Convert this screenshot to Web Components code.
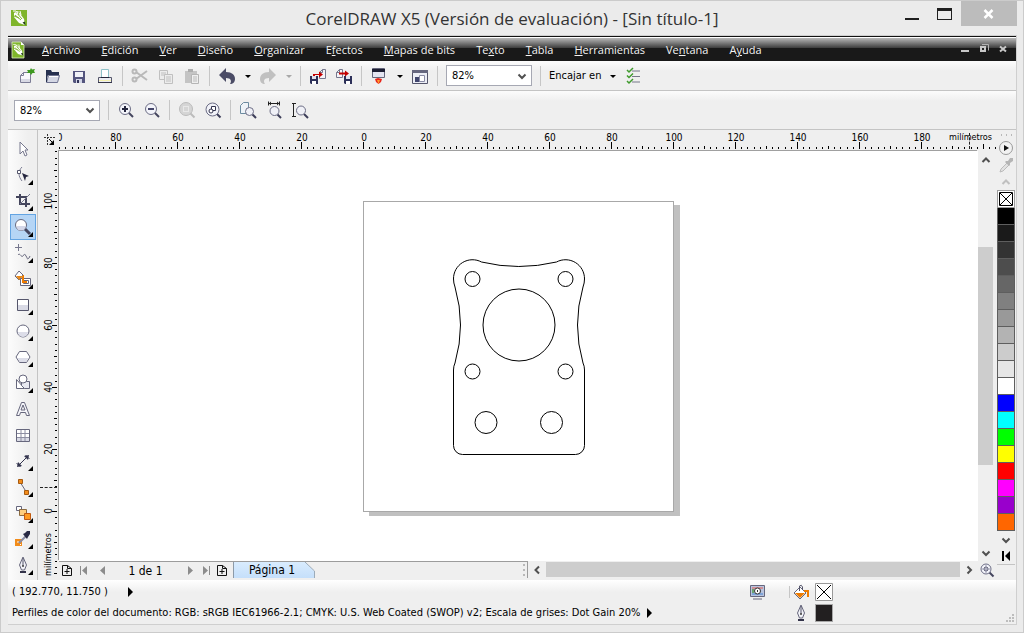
<!DOCTYPE html>
<html lang="es">
<head>
<meta charset="utf-8">
<title>CorelDRAW X5</title>
<style>
html, body { margin: 0; height: 100%; }
body { background: #ebebeb; --ui: "DejaVu Sans Condensed", "DejaVu Sans", sans-serif; --segoe: "Open Sans", "Noto Sans", sans-serif; font-family: var(--ui); font-size: 11px; color: #000; }
</style>
</head>
<body>
<corel-window></corel-window>
<script>
const BASE = `*{box-sizing:border-box}button{font:inherit;color:inherit;border:0;padding:0;margin:0;background:none;display:flex;align-items:center;justify-content:center}svg{display:block}`;

function component(name, html) {
  const template = document.createElement('template');
  customElements.define(name, class extends HTMLElement {
    connectedCallback() {
      if (this.shadowRoot) return;
      const root = this.attachShadow({ mode: 'open' });
      template.innerHTML = `<style>${BASE}</style>` + (typeof html === 'function' ? html(this) : html);
      root.append(template.content.cloneNode(true));
    }
  });
}

/* ---------- icons, 20 x 20 grid ---------- */
const doc = (x, y, w, h, s, f) => `<path d="M${x + 3} ${y}h${w - 3}v${h}h${-w}v${3 - h}z" fill="${f}" stroke="${s}"/><path d="M${x + 3} ${y}v3h-3" fill="none" stroke="${s}"/>`;
const floppy = (x, y) => `<path d="M${x} ${y}h8v8h-7l-1 -1z" fill="#2c3058"/><path d="M${x + 2} ${y}h4v3h-4z" fill="#dfe2ee"/><path d="M${x + 2} ${y + 5}h4v3h-4z" fill="#fff"/>`;
const lens = (stroke, fill, inner, handle) => `<path d="M12.500 12.500l4.500 4.500" stroke="${handle}" stroke-width="2"/><circle cx="9" cy="9" r="5.500" fill="${fill}" stroke="${stroke}"/>${inner}`;
const nib = `<path d="M10 2l3.500 8l-2 5h-3l-2 -5z" fill="#f2f3f8" stroke="#66667c"/><path d="M10 3v8" stroke="#55556a"/><circle cx="10" cy="11" r="1" fill="#444"/><path d="M7 17h6" stroke="#33334a" stroke-width="2"/>`;
const leaf = `<path d="M5 5L9 3L15 11L16 17L10 15L5 9z" fill="#fff"/><path d="M6 7l6 5M7 4l6 7M9 4l1 3M5 8l5 2" stroke="#80b32e"/><path d="M4 3l3 0l2 3M11 3l1 4" stroke="#fff" fill="none"/><path d="M13.500 14.500l3 3l-.5 -4z" fill="#24401a"/>`;
const ICONS = {
  logo: `<path d="M2 2h16v16h-16z" fill="#7fb52b"/>${leaf}`,
  doclogo: `<path d="M4 2h9l3 3v13h-12z" fill="#7fb52b" stroke="#dff0c4" stroke-width=".8"/><path d="M13 2v3h3z" fill="#fff"/><g transform="translate(2 2) scale(.8)">${leaf}</g>`,
  new: `<path d="M6.500 6.500h7v10h-10v-7z" fill="#f8f8fb" stroke="#7c7d96"/><path d="M6.500 6.500v3h-3" fill="none" stroke="#7c7d96"/><path d="M4 13h9v3h-9z" fill="#d8d9e4"/><path d="M10 4l3 0l1 -2l1 1.500l3 -.5l-1 2l1 2l-2.500 0l-1.500 2l-1 -2l-3 0l1 -1.500z" fill="#3d991f"/>`,
  open: `<path d="M3 4h5l1 2h7v3h-11l-2 6z" fill="#26304f"/><path d="M5.500 9.500h11l-2 7h-11z" fill="#d4d7e4" stroke="#6e7290"/><path d="M6 10.500h9" stroke="#fff"/><path d="M3.500 5v11" stroke="#26304f"/>`,
  save: `<path d="M4 5h12v12h-11l-1 -1z" fill="#54557e"/><path d="M6 6h8v5h-8z" fill="#f0f1f7"/><path d="M7 13h6v4h-6z" fill="#d2d5e6"/><path d="M8 14h2v3h-2z" fill="#33355a"/>`,
  print: `<path d="M6.500 3.500h7v8h-7z" fill="#fff" stroke="#8fc2c9"/><path d="M3.500 11.500h13v5h-13z" fill="#ecedf2" stroke="#55566a"/><path d="M4 14h12v1h-12z" fill="#f6f2b0"/><path d="M3 16h14v1h-14z" fill="#35364a"/><path d="M6 11h8v1h-8z" fill="#25263a"/>`,
  cut: `<g fill="none" stroke="#b9b9b9" stroke-width="2"><path d="M6 6l11 8M6 13l11 -8"/><circle cx="4.500" cy="5.500" r="2"/><circle cx="4.500" cy="13.500" r="2"/></g>`,
  copy: `<g fill="#ececec" stroke="#c0c0c0"><path d="M3.500 4.500h8v9h-8z"/><path d="M5 7h5M5 9h5"/><path d="M8.500 8.500h8v9h-8z"/><path d="M10 11h5M10 13h5M10 15h5"/></g>`,
  paste: `<path d="M3 5h12v12h-12z" fill="#c4c4c4"/><path d="M6 3h5v3h-5z" fill="#adadad"/><path d="M9.500 8.500h7v9h-7z" fill="#eee" stroke="#b5b5b5"/><path d="M11 11h4M11 13h4M11 15h4" stroke="#bbb"/>`,
  undo: `<path d="M2 9l7 -7v4c6 0 9 3 9 7c0 3 -2 5 -5 5c2 -3 1 -6 -4 -6v4z" fill="#4b4c66"/>`,
  redo: `<path d="M18 9l-7 -7v4c-6 0 -9 3 -9 7c0 3 2 5 5 5c-2 -3 -1 -6 4 -6v4z" fill="#c0c0c0"/>`,
  import: `${doc(11.5, 3.5, 6, 9, '#77788e', '#f4f4f8')}${floppy(2, 10)}<path d="M5 8h6v-2.500l4 3l-4 3v-2.500h-4v1h-2z" fill="#c40000"/>`,
  export: `${doc(2.5, 3.5, 6, 8, '#77788e', '#f4f4f8')}${floppy(10, 10)}<path d="M5 6.500h6v-2l4 3l-4 3v-2h-6z" fill="#c40000"/>`,
  launch: `<path d="M3.500 2.500h12v9h-12z" fill="#e3e4f0" stroke="#65667c"/><path d="M3 3h13v3h-13z" fill="#1d1e33"/><path d="M6 13l3 -1l4 1l-1 3l-2.500 2l-2.500 -2z" fill="#e8261b"/><path d="M8 14h3l-1.500 4z" fill="#ff9a2e"/>`,
  welcome: `<path d="M2.500 4.500h15v13h-15z" fill="#eceef6" stroke="#55566c"/><path d="M2 4h16v3h-16z" fill="#66677f"/><path d="M5 11h6v5h-6z" fill="#41466e"/><path d="M9.500 9.500h5v6h-5z" fill="#fff" stroke="#8a8ca6"/>`,
  options: `<path d="M9 5h8M9 10.500h8M9 16h8" stroke="#77788a"/><path d="M4 4l2 2l4 -4M4 9.500l2 2l4 -4M4 15l2 2l4 -4" stroke="#3f9a2c" stroke-width="1.500" fill="none"/>`,
  zoomin: lens('#6c6d85', '#f3f4fa', '<path d="M9 6v6M6 9h6" stroke="#25263f" stroke-width="2"/>', '#44455e'),
  zoomout: lens('#6c6d85', '#f3f4fa', '<path d="M6 9h6" stroke="#44456a" stroke-width="2"/>', '#44455e'),
  zoomsel: `<path d="M13 13l4.500 4.500" stroke="#bcbcbc" stroke-width="2"/><circle cx="9" cy="9" r="6.500" fill="#d5d5d5" stroke="#bcbcbc"/><path d="M6.500 6.500h5v5h-5z" fill="none" stroke="#fafafa" stroke-dasharray="1 1"/>`,
  zoomall: `<path d="M13.500 13.500l4 4" stroke="#3c3d58" stroke-width="2"/><circle cx="9.500" cy="9.500" r="6.500" fill="#f0f1f7" stroke="#6c6d85"/><path d="M8.500 6.500h4v4h-4z" fill="#fff" stroke="#33344e"/><circle cx="8" cy="11" r="2" fill="#fff" stroke="#33344e"/>`,
  zoompage: `<path d="M5.500 2.500h5v11h-8v-8z" fill="#eef3f8" stroke="#6c8ba0"/><path d="M14 14l4 4" stroke="#3c3d58" stroke-width="2"/><circle cx="11.500" cy="11.500" r="4" fill="#f0f1f7" stroke="#6c6d85"/>`,
  zoomwidth: `<path d="M4 3.500h12M4.500 1.500v4M15.500 1.500v4" stroke="#222"/><path d="M5 3.500l2 -2v4zM15 3.500l-2 -2v4z" fill="#222"/><path d="M13 14l4 4" stroke="#3c3d58" stroke-width="2"/><circle cx="10.500" cy="11" r="4.500" fill="#f0f1f7" stroke="#6c6d85"/>`,
  zoomheight: `<path d="M3.500 4v12M2 3.500h4M2 16.500h4" stroke="#222"/><path d="M14 14l4 4" stroke="#3c3d58" stroke-width="2"/><circle cx="11" cy="10.500" r="4.500" fill="#f0f1f7" stroke="#6c6d85"/>`,
  pick: `<path d="M7 3v12l3 -3l2 5l2 -1l-2 -5h3z" fill="#fff" stroke="#77788e"/>`,
  shape: `<path d="M9 2c-4 4 -4 9 0 14" fill="none" stroke="#7b7c92"/><path d="M4.500 5.500h3v3h-3z" fill="#fff" stroke="#55566c"/><path d="M9 8l7 3l-3 1l-1 4z" fill="#26273f"/>`,
  crop: `<path d="M7 3v10h10M3 6h10v10" fill="none" stroke="#44455c" stroke-width="2"/><path d="M7 13L17 3" stroke="#77788e"/>`,
  zoom: `<path d="M12 12l5 5" stroke="#44455e" stroke-width="3"/><circle cx="8" cy="8" r="5.500" fill="#fff" stroke="#66677d"/><path d="M3.500 9h9a4.500 4.500 0 0 1 -9 0" fill="#d4d7e8"/>`,
  freehand: `<path d="M5.500 1v7M2 4.500h7" stroke="#77788e"/><path d="M5 12c2 -3 3 3 5 1s1 -3 3 0s1 4 3 2l1 -2" fill="none" stroke="#66677d"/>`,
  smartfill: `<path d="M2 7l4 -5l4 4l-4 5z" fill="#fff" stroke="#66677d"/><path d="M3 7h7l-4 4z" fill="#e88a1c"/><path d="M7.500 9.500h10v7h-10z" fill="#fff" stroke="#66677d"/><path d="M10.500 11.500h5v3h-5z" fill="#fff" stroke="#66677d"/><path d="M10 6h1v6h3v2h-5v-6z" fill="#ef7c00"/>`,
  rect: `<path d="M4.500 4.500h11v11h-11z" fill="#fff" stroke="#55566c"/><path d="M5 10h10v5h-10z" fill="#d9dae5"/>`,
  ellipse: `<circle cx="10" cy="10" r="6" fill="#fff" stroke="#66677d"/><path d="M5 11h10a5 5 0 0 1 -10 0" fill="#dcdde8"/>`,
  polygon: `<path d="M6.500 4.500h7l3.500 5.500l-3.500 5.500h-7l-3.500 -5.500z" fill="#fff" stroke="#66677d"/><path d="M4.500 11h11l-2.500 4h-6z" fill="#dcdde8"/>`,
  shapes: `<path d="M3.500 6.500l8 9h-8z" fill="#fff" stroke="#66677d"/><path d="M8.500 8.500h8v7h-5l-3 -3z" fill="#e8e9f1" stroke="#66677d"/><circle cx="10" cy="6" r="4" fill="#fff" stroke="#66677d"/>`,
  text: `<path d="M3.500 16.500L8.500 3.500h3L16.500 16.500h-3l-1 -3h-5l-1 3zM8 11h4l-2 -5z" fill="#f6f6fa" stroke="#66677d" fill-rule="evenodd"/>`,
  table: `<path d="M3.500 4.500h13v12h-13z" fill="#fff" stroke="#66677d"/><path d="M4 12h12v4h-12z" fill="#d9dae5"/><path d="M4 8.500h12M4 12.500h12M8 5v11M12 5v11" stroke="#8d8ea2"/>`,
  dimension: `<path d="M5 15L15 5" stroke="#33344e"/><path d="M3.500 12l4 4M12.500 4l4 4" stroke="#44455c"/><path d="M4 16l1 -5l4 4zM16 4l-5 1l4 4z" fill="#33344e"/>`,
  connector: `<path d="M7 5l7 11" stroke="#66677d"/><path d="M5.500 2.500h4v4h-4zM11.500 13.500h4v4h-4z" fill="#f28c1a" stroke="#a65a10"/>`,
  blend: `<path d="M3.500 3.500h5v4h-5z" fill="#fff" stroke="#66677d"/><path d="M6.500 6.500h7v6h-7z" fill="#ffcf7d" stroke="#8a6a40"/><path d="M11.500 10.500h6v6h-6z" fill="#ff9a1f" stroke="#c05a10"/>`,
  dropper: `<path d="M2 10h7v7h-7z" fill="#f28c1a"/><path d="M4 13h2M7 15.500h1" stroke="#fff"/><path d="M6 14L13 7" stroke="#8a8ca2" stroke-width="2"/><path d="M10 5l2 -1l2 -2h3v3l-2 3l-1 2z" fill="#292a44"/>`,
  pen: nib,
  bucket: `<path d="M3 11l6 -6l6 6l-6 6z" fill="#fff" stroke="#66677d"/><path d="M4 11h10l-5 5z" fill="#ef7c00"/><path d="M8.500 9v-5q2 -2 3 1v3" fill="none" stroke="#55566c"/><path d="M13 9h4v6" fill="none" stroke="#ef7c00" stroke-width="2"/>`,
  monitor: `<path d="M3.500 3.500h14v11h-14z" fill="#b9c4de" stroke="#66677d"/><path d="M5 5h11v2h-11z" fill="#cf8f96"/><path d="M5 7h2v4h-2z" fill="#6aa66f"/><path d="M5 11h11v2h-11z" fill="#7fa4d8"/><circle cx="10.500" cy="9" r="3" fill="#fff" stroke="#333"/><path d="M10 8h1v2h-1z" fill="#333"/><path d="M6 17h9" stroke="#66677d"/>`,
  eyedrop: `<path d="M4 17l1 -3l6 -6l2 2l-6 6z" fill="#e2e2e2" stroke="#bbb"/><path d="M10 6l2 0l2 -3h3v3l-3 2v2l-1 1l-4 -4z" fill="#b5b5b5"/>`,
  play: `<circle cx="10" cy="10" r="6.500" fill="#f2f2f2" stroke="#9a9a9a"/><path d="M8 7v6l5 -3z" fill="#111"/>`,
  up: `<path d="M6.500 12l3.500 -3.500l3.500 3.500" fill="none" stroke="#505050" stroke-width="2"/>`,
  down: `<path d="M6.500 8.500l3.500 3.500l3.500 -3.500" fill="none" stroke="#505050" stroke-width="2"/>`,
  left: `<path d="M12 6.500l-3.500 3.500l3.500 3.500" fill="none" stroke="#505050" stroke-width="2"/>`,
  right: `<path d="M8.500 6.500l3.500 3.500l-3.500 3.500" fill="none" stroke="#505050" stroke-width="2"/>`,
  uplight: `<path d="M6.500 12l3.500 -3.500l3.500 3.500" fill="none" stroke="#c0c0c0" stroke-width="2"/>`,
  caret: `<path d="M7 9h6l-3 3z" fill="#000"/>`,
  caretoff: `<path d="M7 9h6l-3 3z" fill="#a8a8a8"/>`,
  arrow: `<path d="M7 5v10l5 -5z" fill="#000"/>`,
  expand: `<path d="M7 5v10" stroke="#000" stroke-width="2"/><path d="M14 5v10l-5 -5z" fill="#000"/>`,
  addpage: `<path d="M5.500 5.500h5l4 3v7h-9zM10.500 5.500v3h4M10 9v5M7.500 11.500h5" fill="none" stroke="#111"/>`,
  first: `<path d="M6.500 6v9" stroke="#8c8c8c"/><path d="M13 6v9l-5 -4.500z" fill="#8c8c8c"/>`,
  prev: `<path d="M13 6v9l-5 -4.500z" fill="#8c8c8c"/>`,
  next: `<path d="M8 6v9l5 -4.500z" fill="#8c8c8c"/>`,
  last: `<path d="M14.500 6v9" stroke="#8c8c8c"/><path d="M8 6v9l5 -4.500z" fill="#8c8c8c"/>`,
  navigator: `<path d="M12.500 12.500l4 4" stroke="#44455e" stroke-width="2"/><circle cx="9" cy="9" r="5" fill="#f3f4fa" stroke="#6c6d85"/><circle cx="9" cy="9" r="2" fill="none" stroke="#44455e"/><path d="M9 5v8M5 9h8" stroke="#9a9bb0"/>`,
  origin: `<path d="M8.500 4v12M5 7.500h11" stroke="#333" stroke-dasharray="2 1"/><path d="M10 9l4 4" stroke="#000"/><path d="M15 15v-5l-5 5z" fill="#000"/>`,
  min: `<path d="M3 14h14v2h-14z" fill="#1f1f1f"/>`,
  max: `<path d="M3 4h15v12h-15z" fill="#1f1f1f"/><path d="M4 7h13v8h-13z" fill="#ebebeb"/>`,
  close: `<path d="M5.500 6l8 8M13.500 6l-8 8" stroke="#fff" stroke-width="2.500"/>`,
  mdimin: `<path d="M6 10h8v2h-8z" fill="#c8c8c8"/>`,
  mdimax: `<path d="M7 7h4v4h-4z" fill="#222" stroke="#c8c8c8" stroke-width="2"/><path d="M8 4.500h6.500v6" fill="none" stroke="#b0b0b0"/>`,
  mdiclose: `<path d="M7 6.500l6 5M13 6.500l-6 5" stroke="#c8c8c8" stroke-width="2"/>`
};

component('app-icon', el => `<style>:host{display:block;width:20px;height:20px;flex:none}</style><svg width="20" height="20" viewBox="0 0 20 20" aria-hidden="true">${ICONS[el.getAttribute('name')]}</svg>`);

/* ---------- shared controls ---------- */
component('tool-button', el => `<style>:host{display:block;flex:none;width:26px;height:26px}:host([slim]){width:15px}button{width:100%;height:100%}</style>
<button aria-label="${el.getAttribute('label') || ''}"><app-icon name="${el.getAttribute('icon')}"></app-icon></button>`);
component('tool-separator', `<style>:host{display:block;flex:none;width:1px;height:20px;margin:0 4px;background:#c6c6c6}</style>`);
component('zoom-select', `<style>:host{display:grid;width:86px;height:21px;flex:none;align-items:center;margin-right:4px}
select{grid-area:1/1;appearance:none;width:100%;height:100%;border:1px solid #a6a8b3;border-radius:0;background:#fff;padding:0 5px;margin:0;font:inherit;color:#000}
app-icon{grid-area:1/1;justify-self:end;pointer-events:none}</style>
<select aria-label="Nivel de zoom"><option>82%</option><option>100%</option></select><app-icon name="down"></app-icon>`);
component('tool-bar', `<style>:host{display:flex;align-items:center;padding:0 6px;border-bottom:1px solid #c4c4c4;background:linear-gradient(#fcfcfc,#efefef 10px)}</style><slot></slot>`);

/* ---------- title and menu ---------- */
component('title-bar', `<style>:host{display:grid;grid-template-columns:1fr auto 1fr;height:34px}
h1{margin:0;font:400 17px/36px var(--segoe);color:#333;white-space:nowrap}
.logo{padding:7px 8px}.ctl{display:flex;justify-content:flex-end;padding-right:6px}
button{width:32px;height:25px}button.close{width:56px;background:#bcbcbc;margin-left:1px}</style>
<div class="logo"><app-icon name="logo"></app-icon></div>
<h1>CorelDRAW X5 (Versión de evaluación) - [Sin título-1]</h1>
<div class="ctl"><button aria-label="Minimizar"><app-icon name="min"></app-icon></button><button aria-label="Maximizar"><app-icon name="max"></app-icon></button><button class="close" aria-label="Cerrar"><app-icon name="close"></app-icon></button></div>`);
component('menu-item', `<style>:host{display:block}button{height:23px;white-space:nowrap;display:block}</style><button><slot></slot></button>`);
component('menu-bar', `<style>:host{display:flex;align-items:center;height:25px;border-top:1px solid #111;box-shadow:inset 0 1px #fff;padding:1px 4px 0 0;background:linear-gradient(#b8b8b8 1px,#3c3c3c 11px,#191919 11px);color:#f4f4f4;font:11px/22px var(--segoe)}
nav{display:flex;gap:21px;margin-left:14px;flex:1}.mdi{display:flex}.mdi button{width:19px}</style>
<app-icon name="doclogo"></app-icon>
<nav>
<menu-item><u>A</u>rchivo</menu-item><menu-item><u>E</u>dición</menu-item><menu-item><u>V</u>er</menu-item><menu-item><u>D</u>iseño</menu-item><menu-item><u>O</u>rganizar</menu-item><menu-item>E<u>f</u>ectos</menu-item><menu-item><u>M</u>apas de bits</menu-item><menu-item>Te<u>x</u>to</menu-item><menu-item><u>T</u>abla</menu-item><menu-item><u>H</u>erramientas</menu-item><menu-item>Ve<u>n</u>tana</menu-item><menu-item>A<u>y</u>uda</menu-item>
</nav>
<div class="mdi"><button aria-label="Minimizar documento"><app-icon name="mdimin"></app-icon></button><button aria-label="Restaurar documento"><app-icon name="mdimax"></app-icon></button><button aria-label="Cerrar documento"><app-icon name="mdiclose"></app-icon></button></div>`);

/* ---------- toolbox ---------- */
const TOOLS = [['pick', 'Selección'], ['shape', 'Forma', 1], ['crop', 'Recortar', 1], ['zoom', 'Zoom', 1], ['freehand', 'Mano alzada', 1], ['smartfill', 'Relleno inteligente', 1], ['rect', 'Rectángulo', 1], ['ellipse', 'Elipse', 1], ['polygon', 'Polígono', 1], ['shapes', 'Formas', 1], ['text', 'Texto'], ['table', 'Tabla'], ['dimension', 'Cota', 1], ['connector', 'Conector', 1], ['blend', 'Mezcla', 1], ['dropper', 'Cuentagotas', 1], ['pen', 'Contorno', 1]];
component('tool-box', () => `<style>:host{display:block;padding:6px 1px 0 2px;border-right:1px solid #c4c4c4;background:linear-gradient(90deg,#fcfcfc,#efefef 20px)}
button{width:26px;height:26px;position:relative;border:1px solid transparent}button.on{background:#b5d5f5;border-color:#63a4e2}
.fly{position:absolute;right:2px;bottom:2px}</style>
${TOOLS.map(([icon, label, fly]) => `<button class="${icon === 'zoom' ? 'on' : ''}" aria-label="${label}"><app-icon name="${icon}"></app-icon>${fly ? '<svg class="fly" width="5" height="5"><path d="M5 0v5h-5z"/></svg>' : ''}</button>`).join('')}`);

/* ---------- rulers: 3.1 px per millimetre, page centre at 50 mm ---------- */
const SCALE = 3.1;
function ticks(vertical) {
  let d = '', labels = '';
  for (let mm = -160; mm <= 300; mm += 2) {
    const p = Math.round((mm - 50) * SCALE * (vertical ? -1 : 1));
    const len = mm % 20 === 0 ? (vertical ? 5 : 7) : mm % 10 === 0 ? 3 : 2;
    d += vertical ? `M${19 - len} ${p}h${len}v1h${-len}z` : `M${p} ${19 - len}h1v${len}h-1z`;
    if (mm % 20) continue;
    if (vertical) {
      if (mm >= 0 && mm <= 100) labels += `<text transform="translate(14 ${p}) rotate(-90)">${mm}</text>`;
    } else if (mm >= -100 && mm < 200) {
      labels += `<text x="${p + 1}" y="11">${Math.abs(mm)}</text>`;
    }
  }
  return `<path d="${d}" shape-rendering="crispEdges"/>${labels}`;
}
component('ruler-horizontal', () => `<style>:host{display:block;position:relative;padding-right:19px;overflow:hidden;font-size:10px;text-anchor:middle}
svg{overflow:visible}.unit{position:absolute;right:4px;top:1px;font-size:9px;line-height:13px;background:#efefef}.mark{position:absolute;right:26px;top:3px;height:16px;border-left:1px dashed #222}</style>
<svg width="100%" height="20"><svg x="50%" overflow="visible">${ticks(false)}</svg></svg><span class="unit">milímetros</span><i class="mark"></i>`);
component('ruler-vertical', () => `<style>:host{display:block;position:relative;padding-bottom:17px;overflow:hidden;font-size:10px;text-anchor:middle}
svg{overflow:visible}.unit{position:absolute;left:4px;bottom:2px;writing-mode:vertical-rl;transform:rotate(180deg);font-size:9px;line-height:12px;background:#efefef}.mark{position:absolute;left:2px;bottom:90px;width:17px;border-top:1px dashed #222}</style>
<svg width="20" height="100%"><svg y="50%" overflow="visible">${ticks(true)}</svg></svg><span class="unit">milímetros</span><i class="mark"></i>`);

/* ---------- drawing ---------- */
component('drawing-canvas', `<style>:host{display:flex;box-sizing:border-box;padding-top:1px;align-items:center;justify-content:center;background:#fff;min-width:0;min-height:0;overflow:hidden}
.page{border:1px solid #a8a8a8;background:#fff;box-shadow:6px 4px 0 #c0c0c0}</style>
<div class="page"><svg width="309" height="309" viewBox="1 1 309 309" fill="none" stroke="#000">
<path d="M90.500 78A19 19 0 0 1 118.500 61Q155.500 70 193.500 61A19 19 0 0 1 221.500 78Q221.500 82 220 86Q209 124 220 162Q221.500 165 221.500 169V244.500A9 9 0 0 1 212.500 253.500H99.500A9 9 0 0 1 90.500 244.500V169Q90.500 165 92 162Q103 124 92 86Q90.500 82 90.500 78Z"/>
<circle cx="109.500" cy="78" r="7.500"/><circle cx="202.500" cy="78" r="7.500"/><circle cx="109.500" cy="170.500" r="7.500"/><circle cx="202.500" cy="170.500" r="7.500"/>
<circle cx="156" cy="124" r="36"/><circle cx="123" cy="221.500" r="11"/><circle cx="188.500" cy="221.500" r="11"/></svg></div>`);
component('scroll-bar', el => {
  const v = el.hasAttribute('vertical');
  return `<style>:host{display:flex;flex-direction:${v ? 'column' : 'row'};background:#efefef;min-width:0;min-height:0}
button{flex:none;${v ? 'width:15px;height:17px' : 'width:18px;height:15px'};overflow:hidden}.thumb{background:#cdcdcd;flex:${v ? 218 : 1};${v ? 'width:15px' : 'height:15px'}}.gap{flex:${v ? 79 : 0}}</style>
<button aria-label="Desplazar atrás"><app-icon name="${v ? 'up' : 'left'}"></app-icon></button><div class="gap"></div><div class="thumb"></div><div class="gap"></div><button aria-label="Desplazar adelante"><app-icon name="${v ? 'down' : 'right'}"></app-icon></button>`;
});
component('page-navigator', `<style>:host{display:flex;flex:0 1 469px;box-sizing:border-box;border-top:1px solid #9c9c9c;border-right:1px solid #9c9c9c;font-size:12px;height:17px;min-width:0}
button{height:16px;width:15px;flex:none;overflow:visible}.w{width:20px}.count{width:73px;text-align:center;line-height:18px}
.tab{width:81px;margin-left:1px;border-left:1px solid #8c9aa8;background:linear-gradient(#d9ecfe,#c5dffa);line-height:15px;padding-right:4px;clip-path:polygon(0 0,72px 0,100% 9px,100% 100%,0 100%)}
.edge{position:relative;flex:none;margin-left:-9px}.grip{margin:2px 2px 0 auto;width:2px;height:12px;background:repeating-linear-gradient(#b8b8b8 0 2px,transparent 2px 5px)}</style>
<button aria-label="Añadir página al principio"><app-icon name="addpage"></app-icon></button><button class="w" aria-label="Primera página"><app-icon name="first"></app-icon></button><button aria-label="Página anterior"><app-icon name="prev"></app-icon></button><span class="count">1 de 1</span><button aria-label="Página siguiente"><app-icon name="next"></app-icon></button><button aria-label="Última página"><app-icon name="last"></app-icon></button><button class="w" aria-label="Añadir página al final"><app-icon name="addpage"></app-icon></button><button class="tab">Página 1</button><svg class="edge" width="10" height="16"><path d="M0 0L9.500 9v7" fill="none" stroke="#9cabb9"/></svg><span class="grip"></span>`);

component('document-view', `<style>:host{display:grid;grid-template-columns:21px minmax(0,1fr) 18px;grid-template-rows:21px minmax(0,1fr) 17px 2px;background:#efefef;min-width:0;min-height:0}
.corner{display:flex;overflow:hidden;justify-content:center}ruler-horizontal{grid-column:2/4}ruler-vertical{grid-row:2/4}
drawing-canvas{box-shadow:-1px -1px 0 #a0a0a0;z-index:1}.foot{display:flex;grid-column:2/4;min-width:0}
scroll-bar[vertical]{grid-column:3}.foot scroll-bar{flex:1;padding-top:1px}.foot button{width:18px;height:17px;overflow:hidden}</style>
<div class="corner"><app-icon name="origin"></app-icon></div><ruler-horizontal></ruler-horizontal>
<ruler-vertical></ruler-vertical><drawing-canvas></drawing-canvas><scroll-bar vertical></scroll-bar>
<div class="foot"><page-navigator></page-navigator><scroll-bar></scroll-bar><button aria-label="Navegador"><app-icon name="navigator"></app-icon></button></div>`);

/* ---------- colour palette ---------- */
const COLORS = ['#000000', '#1a1a1a', '#333333', '#4d4d4d', '#666666', '#808080', '#999999', '#b3b3b3', '#cccccc', '#e6e6e6', '#ffffff', '#0000ff', '#00ffff', '#00ff00', '#ffff00', '#ff0000', '#ff00ff', '#9900cc', '#ff6600'];
component('color-palette', () => `<style>:host{display:block;width:20px;background:#efefef;padding-right:1px}
.col{width:18px;margin-left:1px}.grip{height:9px;background:radial-gradient(circle,#b8b8b8 1px,transparent 1px) 2px 2px/5px 6px repeat-x}
.col>button{width:18px;height:17px;overflow:hidden}.none{height:18px!important;border:1px solid #9c9c9c;background:#fff}
.sw{border:solid #5e5e5e;border-width:0 1px 1px 1px}.col>.exp{border-bottom:1px solid #c4c4c4}</style>
<div class="col"><div class="grip"></div><button aria-label="Menú de paleta"><app-icon name="play"></app-icon></button><button aria-label="Muestrear color"><app-icon name="eyedrop"></app-icon></button><button aria-label="Subir"><app-icon name="uplight"></app-icon></button>
<button class="none" aria-label="Sin color"><svg width="14" height="14"><path d="M.5 .5h13v13h-13zM1 1l12 12M13 1l-12 12" fill="none" stroke="#000"/></svg></button>
${COLORS.map(c => `<button class="sw" style="background:${c}" aria-label="${c}"></button>`).join('')}
<button aria-label="Bajar"><app-icon name="down"></app-icon></button><button class="exp" aria-label="Expandir paleta"><app-icon name="expand"></app-icon></button></div>`);

/* ---------- status bar ---------- */
component('status-bar', `<style>:host{display:grid;position:relative;box-sizing:border-box;grid-template-columns:minmax(0,1fr) auto;height:44px;padding:1px 1px 0 4px;background:linear-gradient(#fff,#efefef 12px);line-height:21px;white-space:nowrap}
.row{display:flex;align-items:center;height:21px}.gap{gap:13px}.info{display:grid;width:268px;grid-template:21px 21px/42px 2px 24px 20px;align-items:center}
.sw{width:18px;height:18px;border:1px solid #a8a8a8;background:#221f20}.sep{border-left:1px solid #c6c6c6;height:12px}
.grip{position:absolute;right:2px;bottom:2px}</style>
<div><div class="row gap"><span>( 192.770, 11.750 )</span><app-icon name="arrow"></app-icon></div><div class="row"><span>Perfiles de color del documento: RGB: sRGB IEC61966-2.1; CMYK: U.S. Web Coated (SWOP) v2; Escala de grises: Dot Gain 20%</span><app-icon name="arrow"></app-icon></div></div>
<div class="info"><app-icon name="monitor"></app-icon><span class="sep"></span><app-icon name="bucket"></app-icon><svg width="18" height="18"><path d="M.5 .5h17v17h-17z" fill="#fff" stroke="#999"/><path d="M2 2l14 14M16 2l-14 14" stroke="#000"/></svg><span></span><span></span><app-icon name="pen"></app-icon><div class="sw"></div></div>
<svg class="grip" width="8" height="8" fill="#bdbdbd"><path d="M6 0h2v2h-2zM3 3h2v2h-2zM6 3h2v2h-2zM0 6h2v2h-2zM3 6h2v2h-2zM6 6h2v2h-2z"/></svg>`);

/* ---------- window ---------- */
component('corel-window', `<style>:host{display:flex;flex-direction:column;box-sizing:border-box;min-height:100vh;border:1px solid #cbcbcb;background:#ebebeb}
main{flex:1;display:flex;flex-direction:column;margin:0 6px 7px 7px;border:1px solid #cfcfcf;border-left:0;min-height:0}
menu-bar,tool-bar{box-sizing:border-box}.std{height:30px}.prop{height:39px}.work{flex:1;display:flex;min-height:450px}document-view{flex:1}tool-box,color-palette{flex:none;box-sizing:border-box}
.snap{display:flex;align-items:center;height:26px;margin:0 4px}zoom-select.a{margin:0 4px}</style>
<title-bar></title-bar>
<main>
<menu-bar></menu-bar>
<tool-bar class="std">
<tool-button icon="new" label="Nuevo"></tool-button><tool-button icon="open" label="Abrir"></tool-button><tool-button icon="save" label="Guardar"></tool-button><tool-button icon="print" label="Imprimir"></tool-button><tool-separator></tool-separator>
<tool-button icon="cut" label="Cortar"></tool-button><tool-button icon="copy" label="Copiar"></tool-button><tool-button icon="paste" label="Pegar"></tool-button><tool-separator></tool-separator>
<tool-button icon="undo" label="Deshacer"></tool-button><tool-button slim icon="caret" label="Lista deshacer"></tool-button><tool-button icon="redo" label="Rehacer"></tool-button><tool-button slim icon="caretoff" label="Lista rehacer"></tool-button><tool-separator></tool-separator>
<tool-button icon="import" label="Importar"></tool-button><tool-button icon="export" label="Exportar"></tool-button><tool-separator></tool-separator>
<tool-button icon="launch" label="Iniciador de aplicaciones"></tool-button><tool-button slim icon="caret" label="Lista de aplicaciones"></tool-button><tool-button icon="welcome" label="Pantalla de bienvenida"></tool-button><tool-separator></tool-separator>
<zoom-select class="a"></zoom-select><tool-separator></tool-separator>
<button class="snap">Encajar en</button><tool-button slim icon="caret" label="Lista encajar"></tool-button><tool-button icon="options" label="Opciones"></tool-button>
</tool-bar>
<tool-bar class="prop">
<zoom-select></zoom-select><tool-separator></tool-separator>
<tool-button icon="zoomin" label="Acercar"></tool-button><tool-button icon="zoomout" label="Alejar"></tool-button><tool-separator></tool-separator>
<tool-button icon="zoomsel" label="Zoom a selección"></tool-button><tool-button icon="zoomall" label="Zoom a todos los objetos"></tool-button><tool-separator></tool-separator>
<tool-button icon="zoompage" label="Zoom a página"></tool-button><tool-button icon="zoomwidth" label="Zoom a anchura"></tool-button><tool-button icon="zoomheight" label="Zoom a altura"></tool-button>
</tool-bar>
<div class="work"><tool-box></tool-box><document-view></document-view><color-palette></color-palette></div>
<status-bar></status-bar>
</main>`);
</script>
</body>
</html>
